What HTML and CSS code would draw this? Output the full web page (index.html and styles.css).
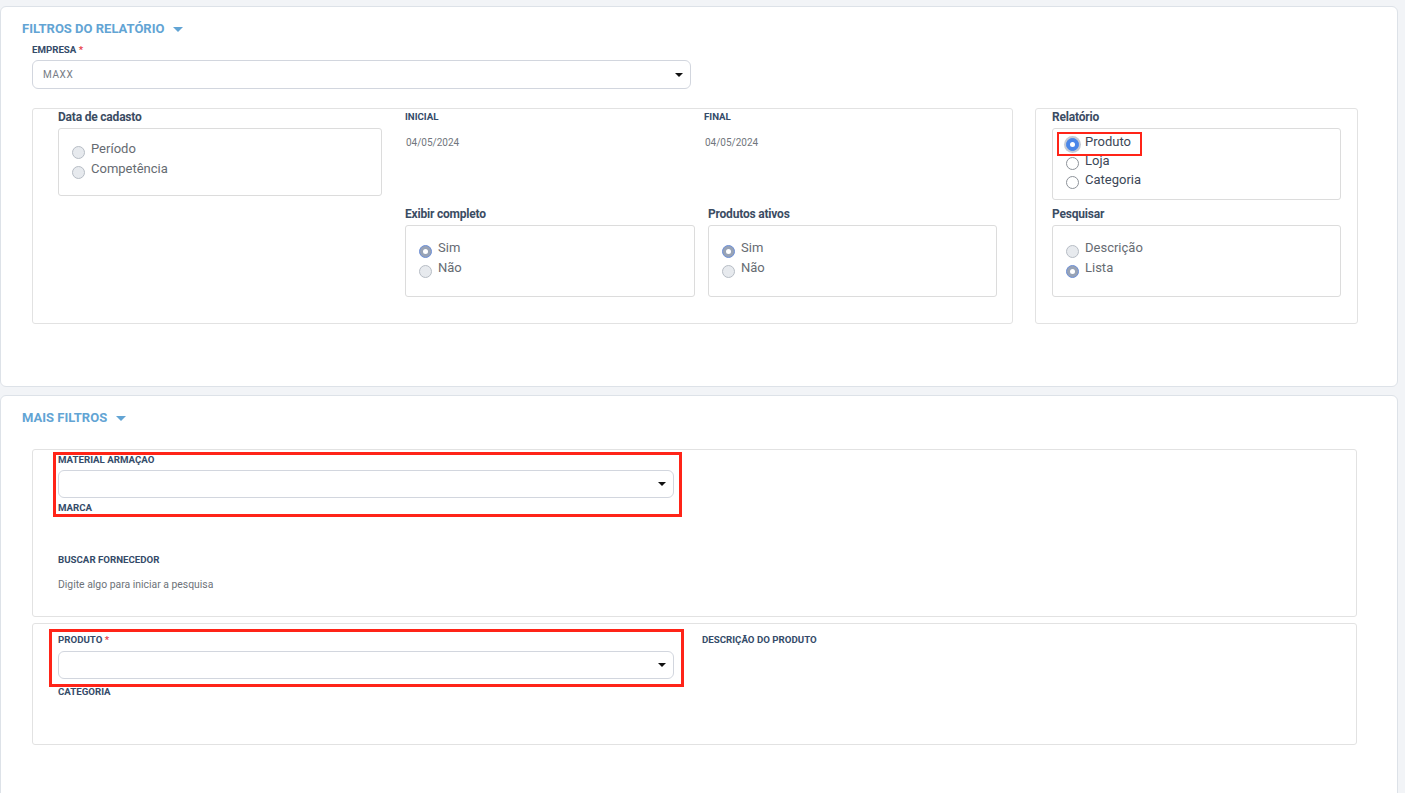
FILE: index.html
```html
<!DOCTYPE html>
<html lang="pt-BR">
<head>
<meta charset="utf-8">
<title>Filtros do relatório</title>
<link rel="stylesheet" href="styles.css">
</head>
<body>
<main class="page">
  <section class="card card-top">
    <h2 class="card-title">FILTROS DO RELATÓRIO <span class="title-caret"></span></h2>
    <div class="card-body">
      <div class="field field-empresa">
        <div class="lbl">EMPRESA <span class="req">*</span></div>
        <div class="select select-empresa"><span class="select-value">MAXX</span><span class="caret"></span></div>
      </div>

      <div class="filters-row">
        <div class="panel panel-main">
          <div class="col col-data">
            <div class="group-title">Data de cadasto</div>
            <div class="optbox optbox-data">
              <div class="opt"><span class="radio"></span>Período</div>
              <div class="opt"><span class="radio"></span>Competência</div>
            </div>
          </div>
          <div class="col col-mid">
            <div class="date-field">
              <div class="lbl">INICIAL</div>
              <div class="date">04/05/2024</div>
            </div>
            <div class="group-title">Exibir completo</div>
            <div class="optbox optbox-2">
              <div class="opt"><span class="radio radio-muted-on"></span>Sim</div>
              <div class="opt"><span class="radio"></span>Não</div>
            </div>
          </div>
          <div class="col col-last">
            <div class="date-field date-field-final">
              <div class="lbl">FINAL</div>
              <div class="date">04/05/2024</div>
            </div>
            <div class="group-title">Produtos ativos</div>
            <div class="optbox optbox-2">
              <div class="opt"><span class="radio radio-muted-on"></span>Sim</div>
              <div class="opt"><span class="radio"></span>Não</div>
            </div>
          </div>
        </div>

        <div class="panel panel-side">
          <div class="group-title">Relatório</div>
          <div class="optbox optbox-rel">
            <div class="opt opt-dark opt-hl"><span class="radio radio-on"></span>Produto<span class="hl hl-produto"></span></div>
            <div class="opt opt-dark"><span class="radio radio-empty"></span>Loja</div>
            <div class="opt opt-dark"><span class="radio radio-empty"></span>Categoria</div>
          </div>
          <div class="group-title group-title-pesq">Pesquisar</div>
          <div class="optbox optbox-2">
            <div class="opt"><span class="radio"></span>Descrição</div>
            <div class="opt"><span class="radio radio-muted-on"></span>Lista</div>
          </div>
        </div>
      </div>
    </div>
  </section>

  <section class="card card-more">
    <h2 class="card-title">MAIS FILTROS <span class="title-caret"></span></h2>
    <div class="card-body">
      <div class="box box-a">
        <div class="hl-group">
          <div class="lbl">MATERIAL ARMAÇAO</div>
          <div class="select select-wide"><span class="caret"></span></div>
          <div class="lbl lbl-marca">MARCA</div>
          <span class="hl hl-material"></span>
        </div>
        <div class="lbl lbl-buscar">BUSCAR FORNECEDOR</div>
        <div class="hint">Digite algo para iniciar a pesquisa</div>
      </div>

      <div class="box box-b">
        <div class="box-b-left">
          <div class="hl-group">
            <div class="lbl">PRODUTO <span class="req">*</span></div>
            <div class="select select-wide select-produto"><span class="caret"></span></div>
            <span class="hl hl-produto-sel"></span>
          </div>
          <div class="lbl lbl-categoria">CATEGORIA</div>
        </div>
        <div class="box-b-right">
          <div class="lbl">DESCRIÇÃO DO PRODUTO</div>
        </div>
      </div>
    </div>
  </section>
</main>
</body>
</html>
```

FILE: styles.css
```css
* {
  box-sizing: border-box;
}

html,
body {
  margin: 0;
}

body {
  background: #f2f4f7;
  font-family: Roboto, "Noto Sans", Arial, sans-serif;
  overflow: hidden;
}

.page {
  padding: 6px 7px 0 0;
  display: flex;
  flex-direction: column;
  gap: 8px;
}

.card {
  background: #ffffff;
  border: 1px solid #dde2e8;
  border-radius: 6px;
  padding: 13px 0 0 21px;
}

.card-top {
  height: 381px;
}

.card-more {
  padding-bottom: 80px;
}

.card-title {
  margin: 0;
  font-size: 13px;
  line-height: 16px;
  font-weight: 700;
  color: #62a4d4;
  display: flex;
  align-items: center;
  gap: 9px;
  padding-top: 1px;
}

.title-caret {
  width: 0;
  height: 0;
  border-left: 5px solid transparent;
  border-right: 5px solid transparent;
  border-top: 5px solid #62a4d4;
  margin-top: 1px;
}

.card-body {
  margin-left: 10px;
}

.lbl {
  font-size: 9.7px;
  line-height: 11px;
  font-weight: 700;
  color: #344b69;
  white-space: nowrap;
}

.req {
  color: #e8404a;
}

.field-empresa {
  margin-top: 7px;
}

.select {
  position: relative;
  height: 29px;
  margin-top: 5px;
  border: 1px solid #d2d6de;
  border-radius: 6px;
  background: #ffffff;
  display: flex;
  align-items: center;
  padding-left: 10px;
}

.select-empresa {
  width: 659px;
}

.select-value {
  font-size: 10px;
  letter-spacing: 0.6px;
  color: #777d85;
}

.caret {
  position: absolute;
  right: 7px;
  top: 50%;
  margin-top: -2px;
  width: 0;
  height: 0;
  border-left: 4px solid transparent;
  border-right: 4px solid transparent;
  border-top: 4px solid #111111;
}

.filters-row {
  margin-top: 19px;
  display: flex;
  gap: 22px;
}

.panel {
  height: 216px;
  border: 1px solid #e2e2e2;
  border-radius: 3px;
}

.panel-main {
  width: 981px;
  padding: 1px 0 0 25px;
  display: flex;
}

.panel-side {
  width: 323px;
  padding: 1px 0 0 16px;
}

.panel-side .optbox {
  width: 289px;
}

.col-data {
  width: 324px;
  margin-right: 23px;
}

.col-mid {
  width: 290px;
  margin-right: 13px;
}

.col-last {
  width: 289px;
}

.group-title {
  font-size: 12px;
  line-height: 14px;
  font-weight: 700;
  color: #3b4c63;
  letter-spacing: -0.2px;
}

.group-title-pesq {
  margin-top: 7px;
}

.date-field {
  height: 97px;
}

.date-field-final {
  margin-left: -4px;
}

.date-field .lbl {
  line-height: 14px;
}

.date {
  margin-top: 13px;
  padding-left: 1px;
  font-size: 10px;
  line-height: 12px;
  color: #71767d;
}

.optbox {
  margin-top: 4px;
  border: 1px solid #dcdcdc;
  border-radius: 3px;
  padding-left: 13px;
}

.optbox-data {
  height: 68px;
  padding-top: 10px;
}

.optbox-2 {
  margin-top: 4px;
  height: 72px;
  padding-top: 12px;
}

.optbox-rel {
  height: 72px;
  padding-top: 3px;
}

.opt {
  display: flex;
  align-items: flex-start;
  font-size: 13px;
  line-height: 20px;
  color: #666b72;
}

.optbox-2 .opt,
.optbox-rel .opt {
  line-height: 19px;
}

.opt-dark {
  color: #3c4757;
}

.opt-hl {
  position: relative;
}

.radio {
  position: relative;
  flex: none;
  width: 13px;
  height: 13px;
  margin-top: 7px;
  margin-right: 6px;
  border-radius: 50%;
  border: 1px solid #b7bdc5;
  background: #e7eaee;
}

.optbox-rel .radio {
  margin-top: 6px;
}

.radio-empty {
  background: #ffffff;
  border-color: #8d9299;
}

.radio-muted-on {
  background: #98a3b6;
  border-color: #6c8fd8;
}

.radio-on {
  background: #4a86e8;
  border-color: #4a86e8;
  box-shadow: 0 0 0 2px #c5cbd6;
}

.radio-muted-on::after,
.radio-on::after {
  content: "";
  position: absolute;
  left: 50%;
  top: 50%;
  width: 5px;
  height: 5px;
  margin: -2.5px 0 0 -2.5px;
  border-radius: 50%;
  background: #ffffff;
}

.hl {
  position: absolute;
  border: 3px solid #ff2418;
  pointer-events: none;
}

.hl-produto {
  left: -9px;
  top: 0;
  width: 85px;
  height: 24px;
  border-width: 2px;
}

.box {
  width: 1325px;
  border: 1px solid #e2e2e2;
  border-radius: 3px;
  padding-left: 25px;
}

.box-a {
  margin-top: 23px;
  height: 168px;
  padding-top: 4px;
}

.hl-group {
  position: relative;
  width: 616px;
}

.select-wide {
  width: 616px;
  height: 28px;
}

.select-wide-a {
  margin-top: 5px;
}

.lbl-marca {
  margin-top: 4px;
}

.hl-material {
  left: -5px;
  top: -2px;
  width: 629px;
  height: 65px;
}

.lbl-buscar {
  margin-top: 41px;
}

.hint {
  margin-top: 14px;
  font-size: 10.4px;
  line-height: 12px;
  color: #6d7278;
}

.box-b {
  margin-top: 6px;
  height: 122px;
  padding-top: 10px;
  display: flex;
  gap: 28px;
}

.select-produto {
  margin-top: 6px;
}

.hl-produto-sel {
  left: -9px;
  top: -5px;
  width: 635px;
  height: 58px;
}

.lbl-categoria {
  margin-top: 7px;
}
```
